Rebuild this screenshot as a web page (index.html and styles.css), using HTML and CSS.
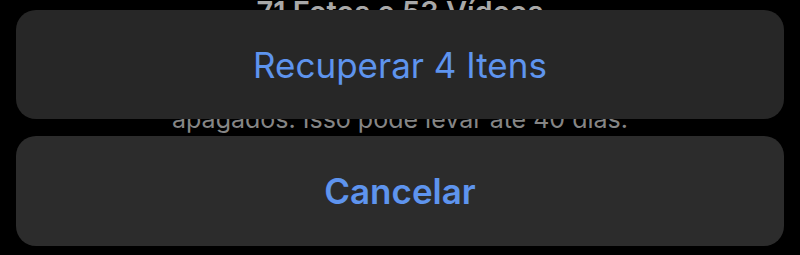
FILE: index.html
```html
<!DOCTYPE html>
<html>
<head>
    <meta charset="utf-8">
    <link rel="stylesheet" href="styles.css">
</head>
<body>
    <div class="backdrop">
        <p class="backdrop-title">71 Fotos e 53 Vídeos</p>
        <p class="backdrop-text">apagados. Isso pode levar até 40 dias.</p>
    </div>

    <div class="sheet">
        <button class="action action-group">Recuperar 4 Itens</button>
        <button class="action action-cancel">Cancelar</button>
    </div>
</body>
</html>
```

FILE: styles.css
```css
body {
    margin: 0;
    width: 800px;
    height: 255px;
    overflow: hidden;
    background: #000;
    font-family: Inter, 'Noto Sans', sans-serif;
    position: relative;
}

.backdrop {
    position: absolute;
    inset: 0;
    text-align: center;
}

.backdrop-title {
    position: absolute;
    left: 0;
    right: 0;
    top: -6px;
    margin: 0;
    color: #a8a8a8;
    font-size: 29px;
    font-weight: 600;
}

.backdrop-text {
    position: absolute;
    left: 0;
    right: 0;
    top: 104px;
    margin: 0;
    color: #858585;
    font-size: 25px;
}

.sheet {
    position: relative;
    display: flex;
    flex-direction: column;
    gap: 17px;
    padding: 10px 16px 0;
}

.action {
    height: 109px;
    border: none;
    border-radius: 20px;
    background: #272727;
    color: #5e94ee;
    font-family: Inter, 'Noto Sans', sans-serif;
    font-size: 35px;
    font-weight: 400;
    display: flex;
    align-items: center;
    justify-content: center;
    padding: 0;
}

.action-cancel {
    height: 110px;
    background: #2c2c2c;
    font-weight: 600;
}
```
